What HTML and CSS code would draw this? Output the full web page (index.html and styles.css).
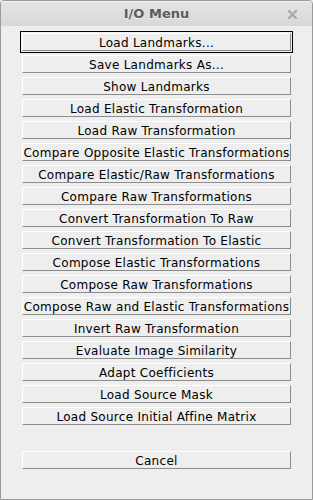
FILE: index.html
```html
<!DOCTYPE html>
<html>
<head>
<meta charset="utf-8">
<link rel="stylesheet" href="styles.css">
</head>
<body>
<div class="window">
  <div class="titlebar">
    <span class="title">I/O Menu</span>
    <svg class="close" width="9" height="9" viewBox="0 0 9 9"><path d="M1 1 L8 8 M8 1 L1 8" stroke="#a8a8a8" stroke-width="2.2" stroke-linecap="square"/></svg>
  </div>
  <div class="content">
    <div class="cell focus"><div class="btn">Load Landmarks...</div></div>
    <div class="cell"><div class="btn">Save Landmarks As...</div></div>
    <div class="cell"><div class="btn">Show Landmarks</div></div>
    <div class="cell"><div class="btn">Load Elastic Transformation</div></div>
    <div class="cell"><div class="btn">Load Raw Transformation</div></div>
    <div class="cell"><div class="btn">Compare Opposite Elastic Transformations</div></div>
    <div class="cell"><div class="btn">Compare Elastic/Raw Transformations</div></div>
    <div class="cell"><div class="btn">Compare Raw Transformations</div></div>
    <div class="cell"><div class="btn">Convert Transformation To Raw</div></div>
    <div class="cell"><div class="btn">Convert Transformation To Elastic</div></div>
    <div class="cell"><div class="btn">Compose Elastic Transformations</div></div>
    <div class="cell"><div class="btn">Compose Raw Transformations</div></div>
    <div class="cell"><div class="btn">Compose Raw and Elastic Transformations</div></div>
    <div class="cell"><div class="btn">Invert Raw Transformation</div></div>
    <div class="cell"><div class="btn">Evaluate Image Similarity</div></div>
    <div class="cell"><div class="btn">Adapt Coefficients</div></div>
    <div class="cell"><div class="btn">Load Source Mask</div></div>
    <div class="cell"><div class="btn">Load Source Initial Affine Matrix</div></div>
    <div class="cell spacer"></div>
    <div class="cell"><div class="btn">Cancel</div></div>
  </div>
</div>
</body>
</html>
```
FILE: styles.css
```css
html, body {
  margin: 0;
  padding: 0;
  background: #eeeeee;
}
.window {
  width: 313px;
  height: 500px;
  box-sizing: border-box;
  border: 1px solid #9a9a9a;
  border-radius: 4px 4px 0 0;
  background: #eeeeee;
  overflow: hidden;
}
.titlebar {
  position: relative;
  height: 25px;
  background: linear-gradient(#e4e4e4, #d8d8d8);
  border-top: 1px solid #f2f2f2;
  box-sizing: border-box;
  display: flex;
  align-items: center;
  justify-content: center;
}
.title {
  font-family: "DejaVu Sans", sans-serif;
  font-weight: bold;
  font-size: 13px;
  color: #5c5c5c;
  text-shadow: 0 1px 0 rgba(255,255,255,0.5);
  margin-top: -2px;
}
.close {
  position: absolute;
  right: 15px;
  top: 8px;
}
.content {
  padding: 5px 0 0 19px;
  display: flex;
  flex-direction: column;
}
.cell {
  width: 273px;
  height: 22px;
  padding: 2px;
  box-sizing: border-box;
}
.cell.focus {
  box-shadow: inset 0 0 0 1px #000;
}
.btn {
  height: 18px;
  box-sizing: border-box;
  border-top: 1px solid #ffffff;
  border-left: 1px solid #ffffff;
  border-right: 1px solid #8c8c8c;
  border-bottom: 1px solid #8c8c8c;
  background: #eeeeee;
  font-family: "DejaVu Sans", sans-serif;
  font-size: 12px;
  letter-spacing: 0.28px;
  line-height: 18px;
  color: #000;
  text-align: center;
  white-space: nowrap;
}
```
